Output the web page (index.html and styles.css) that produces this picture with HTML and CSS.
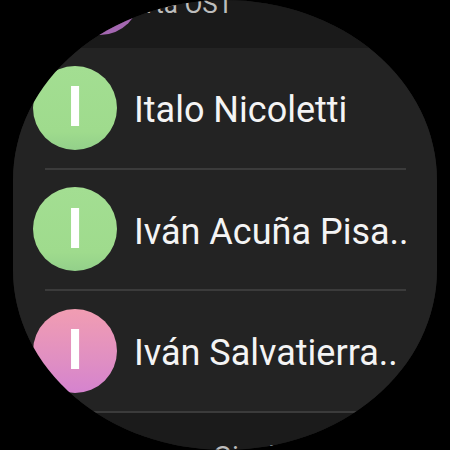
FILE: index.html
```html
<!DOCTYPE html>
<html>
<head>
  <meta charset="UTF-8">
  <title>Contactos</title>
  <link rel="stylesheet" href="styles.css">
</head>
<body>
  <div class="watch">
    <ul class="list">
      <li class="row prev">
        <span class="avatar small purple"></span>
        <span class="name faded">Marta OST</span>
      </li>
      <li class="row">
        <div class="item">
          <span class="avatar green">I</span>
          <span class="name">Italo Nicoletti</span>
        </div>
        <div class="sep"></div>
      </li>
      <li class="row">
        <div class="item">
          <span class="avatar green">I</span>
          <span class="name">Iván Acuña Pisa..</span>
        </div>
        <div class="sep"></div>
      </li>
      <li class="row">
        <div class="item">
          <span class="avatar pink">I</span>
          <span class="name">Iván Salvatierra..</span>
        </div>
        <div class="sep"></div>
      </li>
      <li class="row next">
        <span class="name faded">Gisela</span>
      </li>
    </ul>
  </div>
</body>
</html>
```

FILE: styles.css
```css
body{
  margin:0;
  background-color:#000;
  font-family:Roboto, "Noto Sans", sans-serif;
}
.watch{
  margin-left:13px;
  width:424px;
  height:450px;
  border-radius:50% / 40%;
  overflow:hidden;
  background-color:#1a1a1a;
}
.list{
  list-style:none;
  margin:0;
  padding:0;
  display:flex;
  flex-direction:column;
  height:100%;
}
.row{
  flex:none;
  display:flex;
  flex-direction:column;
  height:121.5px;
  background-color:#232323;
}
.item{
  flex:1;
  display:flex;
  align-items:center;
}
.sep{
  height:2px;
  margin:0 31px 0 32px;
  background-color:#3b3b3b;
}
.avatar{
  flex:none;
  display:flex;
  align-items:center;
  justify-content:center;
  width:84px;
  height:84px;
  margin-left:20px;
  border-radius:50%;
  color:#fff;
  font-size:55px;
  font-weight:700;
  line-height:1;
}
.green{
  background:linear-gradient(180deg, #a3de92 0%, #9fdb8d 78%, #93d08a 100%);
}
.pink{
  background:linear-gradient(180deg, #f19db2 0%, #e08fc2 60%, #d583cf 100%);
}
.purple{
  background-color:#a467b1;
}
.name{
  margin-left:17px;
  padding-top:5px;
  color:#f4f4f4;
  font-size:36px;
  white-space:nowrap;
}
.prev{
  flex-direction:row;
  align-items:flex-start;
  height:48px;
  background-color:#1a1a1a;
}
.avatar.small{
  width:80px;
  height:80px;
  margin-top:-45px;
  margin-left:47px;
}
.name.faded{
  padding-top:0;
  color:#bdbdbd;
  font-size:26px;
  line-height:26px;
}
.prev .name{
  margin-top:-9px;
  margin-left:-31px;
}
.next{
  flex:1 1 auto;
  flex-direction:row;
  background-color:#1b1b1b;
}
.next .name{
  margin-top:30px;
  margin-left:200px;
  font-size:28px;
  line-height:28px;
}
```
